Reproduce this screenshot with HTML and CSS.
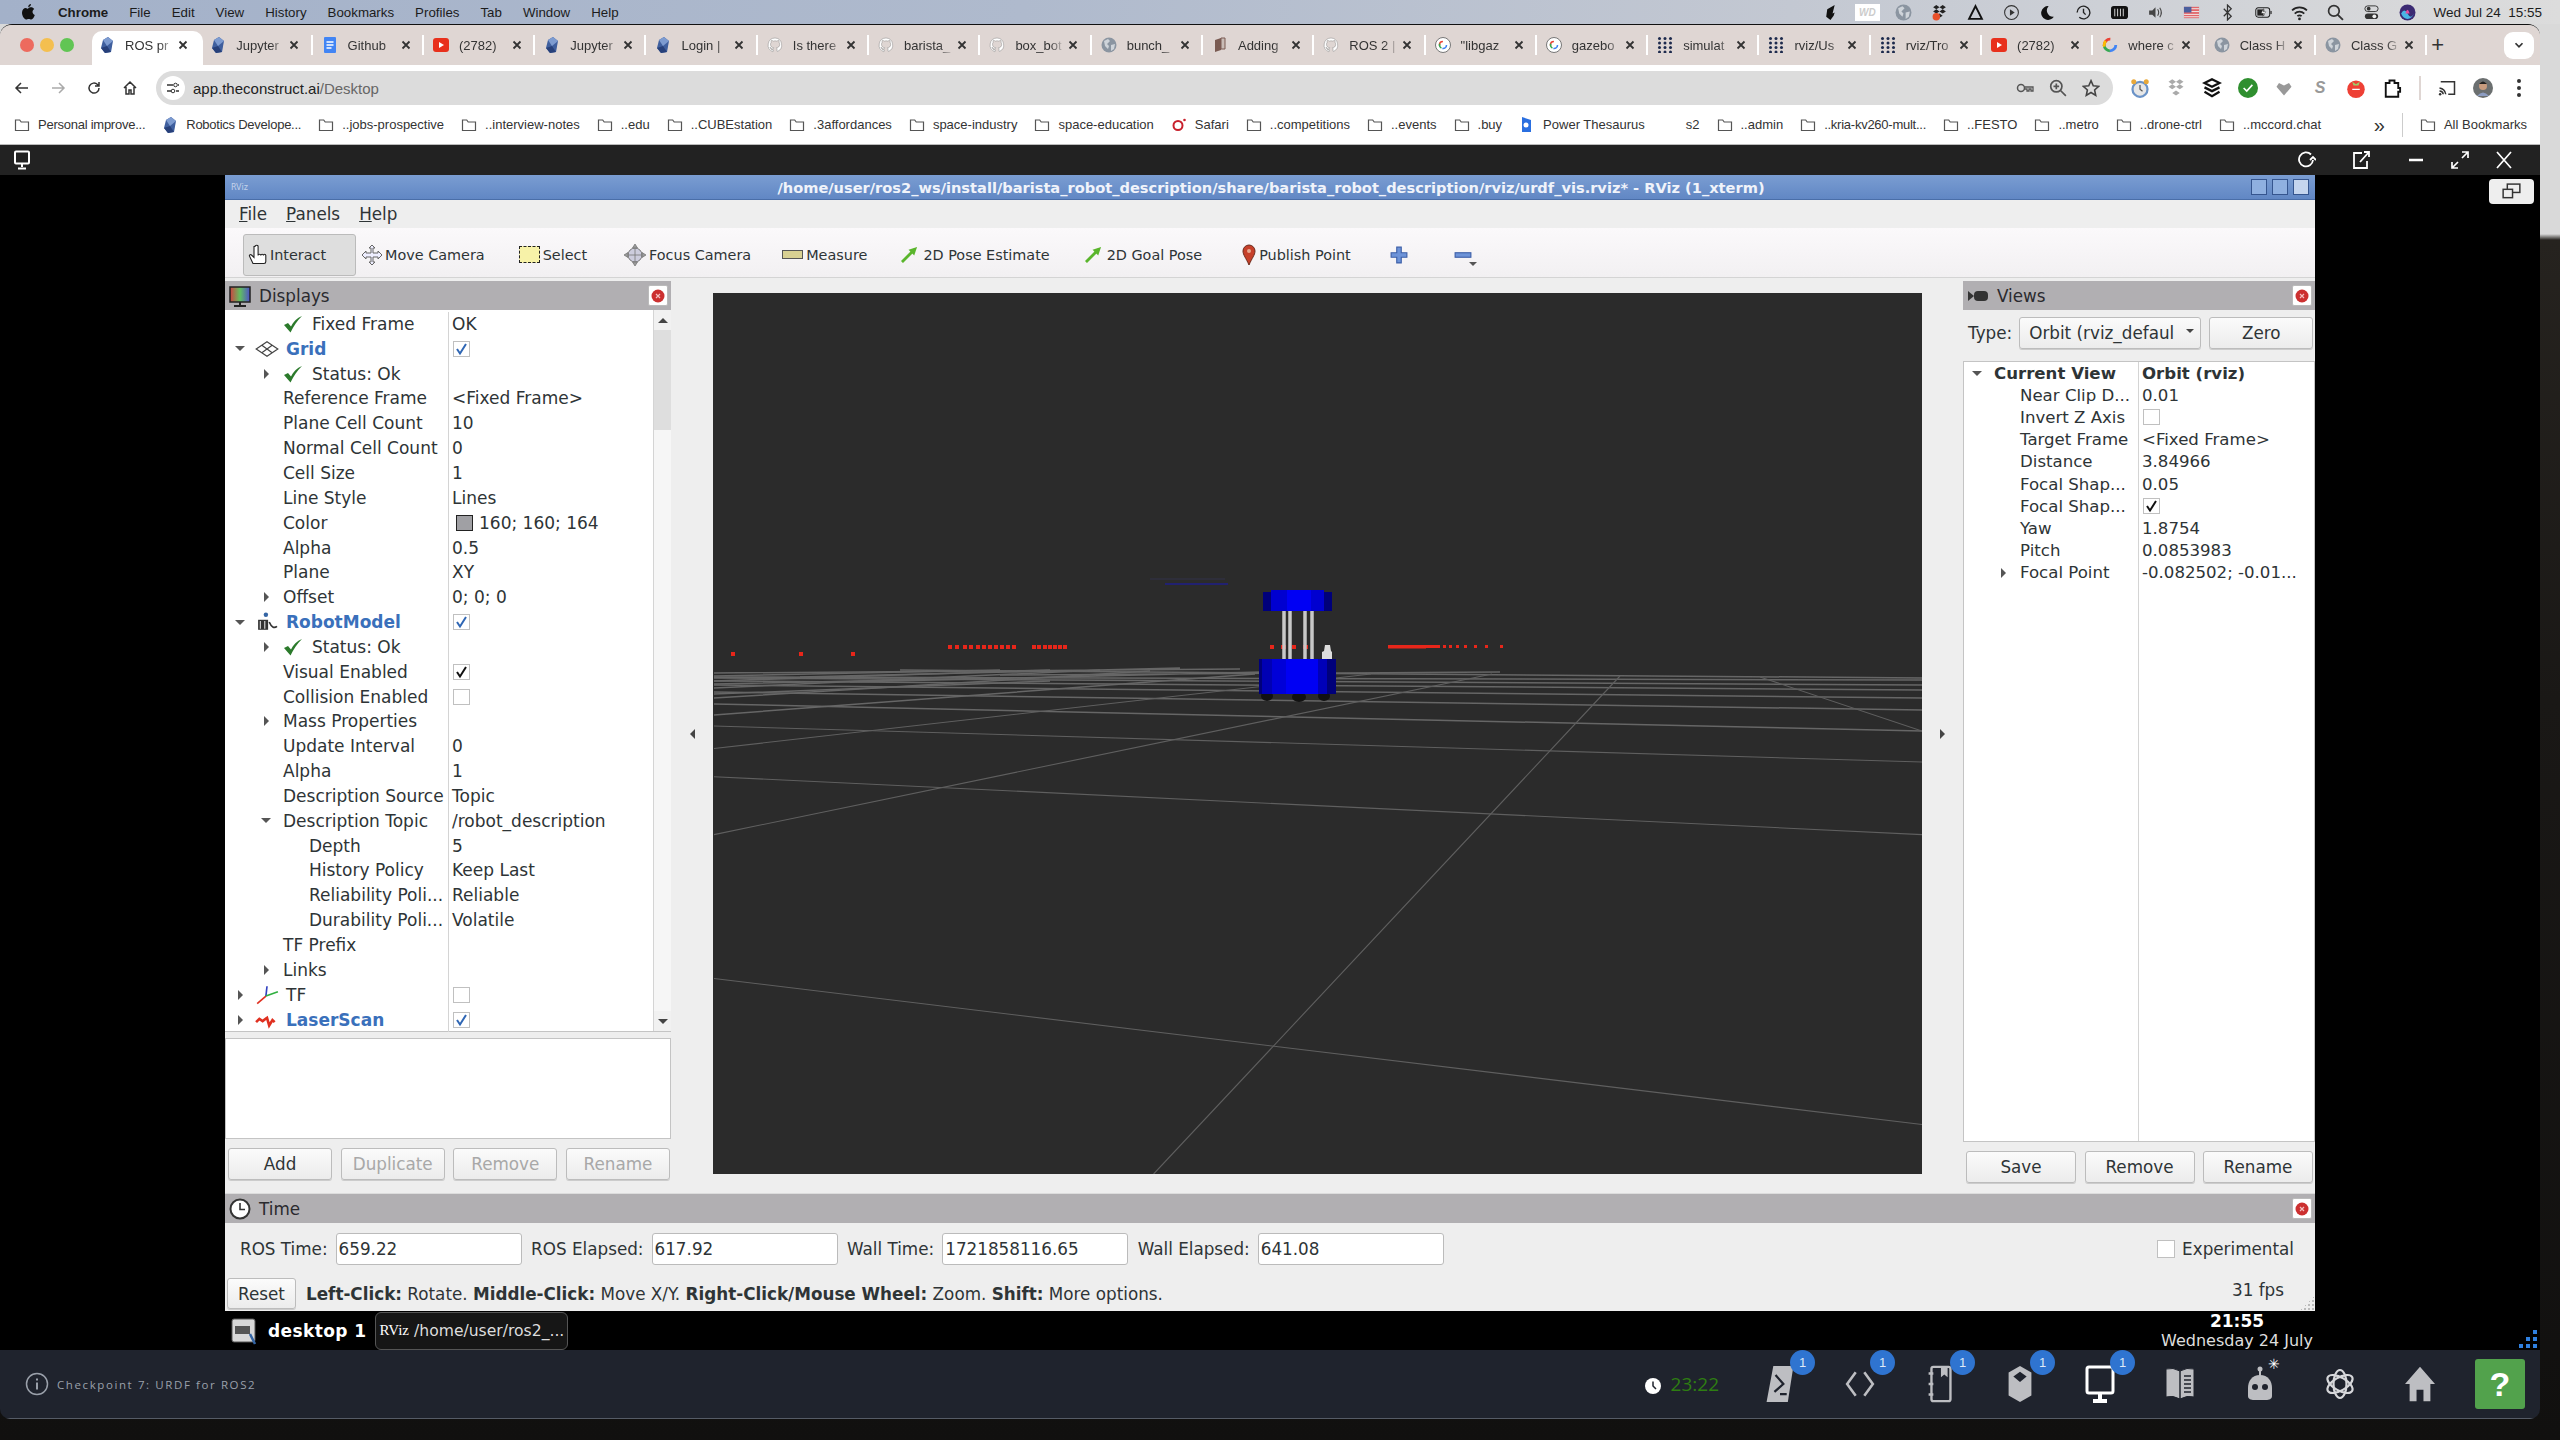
FILE: index.html
```html
<!DOCTYPE html>
<html lang="en">
<head>
    <meta charset="UTF-8">
    <title>RViz - app.theconstruct.ai</title>
    <link rel="stylesheet" href="styles.css">
</head>
<body>

<svg class="defs" width="0" height="0">
    <symbol id="i-folder" viewBox="0 0 16 16"><path d="M1.500 3h4.200l1.500 2h7.300v8.500h-13z" fill="none" stroke="#555" stroke-width="1.200"/></symbol>
    <symbol id="i-cons" viewBox="0 0 16 16"><polygon points="9,0 14,4 12,15 6,16 2,11 4,3" fill="#3f5f9e"/><polygon points="9,0 14,4 8,9 4,3" fill="#7d9bd0"/><polygon points="8,9 12,15 6,16 2,11" fill="#27407a"/></symbol>
    <symbol id="i-github" viewBox="0 0 16 16"><path d="M8 1a7 7 0 0 0-2.200 13.600c.3 0 .5-.2.5-.4v-1.400c-2 .4-2.400-.9-2.400-.9-.3-.8-.8-1-.8-1-.6-.5 0-.5 0-.5.7 0 1.100.7 1.100.7.6 1.100 1.700.8 2.100.6 0-.5.2-.8.4-1-1.600-.2-3.200-.8-3.200-3.500 0-.8.3-1.400.7-1.900 0-.2-.3-.9.1-1.900 0 0 .6-.2 2 .7a7 7 0 0 1 3.600 0c1.400-.9 2-.7 2-.7.4 1 .1 1.700.1 1.900.5.5.7 1.100.7 1.900 0 2.700-1.600 3.300-3.200 3.500.3.2.5.7.5 1.300v2c0 .2.1.4.5.4A7 7 0 0 0 8 1z" fill="#fff" stroke="#8a8a8a" stroke-width=".5"/></symbol>
    <symbol id="i-docs" viewBox="0 0 16 16"><rect x="2" y="0" width="12" height="16" rx="1" fill="#4285f4"/><path d="M4.500 5h7M4.500 8h7M4.500 11h5" stroke="#fff" stroke-width="1.300"/></symbol>
    <symbol id="i-yt" viewBox="0 0 16 16"><rect x="0" y="1" width="16" height="14" rx="3" fill="#e8301c"/><polygon points="6,5 11,8 6,11" fill="#fff"/></symbol>
    <symbol id="i-globe" viewBox="0 0 16 16"><circle cx="8" cy="8" r="7.500" fill="#8b95a1"/><path d="M3 4l4-2 2 2-3 3 2 2-1 3-3-3zM10 8l4-1-1 5-3 2z" fill="#cfd4da"/></symbol>
    <symbol id="i-g" viewBox="0 0 16 16"><circle cx="8" cy="8" r="7.500" fill="#fff" stroke="#777"/><circle cx="8" cy="8" r="3.500" fill="none" stroke="#4285f4" stroke-width="1.600" stroke-dasharray="6 16"/><circle cx="8" cy="8" r="3.500" fill="none" stroke="#ea4335" stroke-width="1.600" stroke-dasharray="6 16" stroke-dashoffset="12"/><circle cx="8" cy="8" r="3.500" fill="none" stroke="#34a853" stroke-width="1.600" stroke-dasharray="5 17" stroke-dashoffset="-7"/></symbol>
    <symbol id="i-gcolor" viewBox="0 0 16 16"><circle cx="8" cy="8" r="5.800" fill="none" stroke="#4285f4" stroke-width="2.800" stroke-dasharray="9 28"/><circle cx="8" cy="8" r="5.800" fill="none" stroke="#ea4335" stroke-width="2.800" stroke-dasharray="10 27" stroke-dashoffset="20"/><circle cx="8" cy="8" r="5.800" fill="none" stroke="#34a853" stroke-width="2.800" stroke-dasharray="9 28" stroke-dashoffset="-9"/><circle cx="8" cy="8" r="5.800" fill="none" stroke="#fbbc05" stroke-width="2.800" stroke-dasharray="6 31" stroke-dashoffset="-16"/></symbol>
    <symbol id="i-dots" viewBox="0 0 16 16"><g fill="#1d2a4d"><circle cx="2.500" cy="1.500" r="1.500"/><circle cx="8" cy="1.500" r="1.500"/><circle cx="13.500" cy="1.500" r="1.500"/><circle cx="2.500" cy="6" r="1.500"/><circle cx="8" cy="6" r="1.500"/><circle cx="13.500" cy="6" r="1.500"/><circle cx="2.500" cy="10.500" r="1.500"/><circle cx="8" cy="10.500" r="1.500"/><circle cx="13.500" cy="10.500" r="1.500"/><circle cx="2.500" cy="15" r="1.500"/><circle cx="8" cy="15" r="1.500"/><circle cx="13.500" cy="15" r="1.500"/></g></symbol>
    <symbol id="i-book" viewBox="0 0 16 16"><path d="M3 3l6-2v12l-6 2z" fill="#7a5b52"/><path d="M9 1h4v11H9z" fill="#c9bcb6" stroke="#7a5b52"/></symbol>
    <symbol id="i-x" viewBox="0 0 12 12"><path d="M2.500 2.500l7 7M9.500 2.500l-7 7" stroke="#333" stroke-width="1.800"/></symbol>
    <symbol id="i-check" viewBox="0 0 20 18"><path d="M1 10l4-2 3 3.500C10 7 14 3 19 1 14 6 10.500 11 7.500 17.500z" fill="#2b7a2b"/></symbol>
    <symbol id="i-tick" viewBox="0 0 14 14"><path d="M2.500 7l3 4.500L11.500 2" fill="none" stroke="currentColor" stroke-width="2"/></symbol>
    <symbol id="i-close" viewBox="0 0 16 16"><circle cx="8" cy="8" r="6.500" fill="#cc3030"/><path d="M6 6l4 4M10 6l-4 4" stroke="#f3c0c0" stroke-width="1.200"/></symbol>
</svg>

<div class="mac-menu">
    <svg class="apple" viewBox="0 0 16 18"><path d="M11 1c.1 1.300-1 3-2.800 3C8 2.600 9.500 1.200 11 1zM8.200 5c.8 0 1.700-.7 3-.7 1 0 2.200.5 3 1.700-2.500 1.500-2 5 .6 6-.6 1.700-2 4.500-3.500 4.500-1 0-1.400-.6-2.600-.6s-1.600.6-2.600.6C4.200 16.500 2 12.800 2 9.800c0-3 1.900-4.700 3.700-4.700 1 0 1.900.9 2.500.9z" fill="#111"/></svg>
    <span class="mac-app">Chrome</span>
    <span>File</span><span>Edit</span><span>View</span><span>History</span><span>Bookmarks</span><span>Profiles</span><span>Tab</span><span>Window</span><span>Help</span>
    <div class="mac-status">
        <span class="ms"><svg viewBox="0 0 16 16"><path d="M11 1L4 5 3 12l4 3 3-4 1-3-2 1z" fill="#111"/></svg></span>
        <span class="ms"><span class="wd">WD</span></span>
        <span class="ms"><svg><use href="#i-globe"/></svg></span>
        <span class="ms"><svg viewBox="0 0 16 16"><path d="M2 3l3-2 3 2-3 2zM8 3l3-2 3 2-3 2zM2 7l3-2 3 2-3 2zM8 7l3-2 3 2-3 2zM5 11l3-2 3 2-3 2z" fill="#222"/><circle cx="5" cy="12" r="3.500" fill="#e8502a"/></svg></span>
        <span class="ms"><svg viewBox="0 0 16 16"><path d="M8 2l6 12H2z" fill="none" stroke="#111" stroke-width="1.800"/></svg></span>
        <span class="ms"><svg viewBox="0 0 16 16"><circle cx="8" cy="8" r="6.500" fill="none" stroke="#333"/><polygon points="6.500,5 11,8 6.500,11" fill="#333"/></svg></span>
        <span class="ms"><svg viewBox="0 0 16 16"><path d="M9 2a6.500 6.500 0 1 0 5 10A6 6 0 0 1 9 2z" fill="#111"/></svg></span>
        <span class="ms"><svg viewBox="0 0 16 16"><path d="M2 8a6 6 0 1 1 2 4.500M8 4.500V8l2 2" fill="none" stroke="#222" stroke-width="1.300"/></svg></span>
        <span class="ms"><svg viewBox="0 0 18 16"><rect x="0" y="1" width="18" height="14" rx="3" fill="#111"/><path d="M4 4v8M7 4v8M10 4v8M13 4v8" stroke="#ddd"/></svg></span>
        <span class="ms"><svg viewBox="0 0 16 16"><path d="M2 6h3l3-3v10l-3-3H2z" fill="#444"/><path d="M10 5q2 3 0 6M12 3.500q3 4.500 0 9" fill="none" stroke="#444"/></svg></span>
        <span class="ms"><svg viewBox="0 0 18 16"><rect x="1" y="2" width="16" height="12" fill="#e2666a"/><rect x="1" y="2" width="8" height="6" fill="#4b5f9e"/><path d="M9 4h8M9 7h8M1 10h16M1 12.500h16" stroke="#eee"/></svg></span>
        <span class="ms"><svg viewBox="0 0 16 16"><path d="M4.500 4.500l7 7L8 15V1l3.500 3.500-7 7" fill="none" stroke="#333" stroke-width="1.200"/></svg></span>
        <span class="ms"><svg viewBox="0 0 22 14"><rect x="1" y="1" width="18" height="12" rx="3" fill="none" stroke="#222" stroke-width="1.300"/><rect x="3" y="3" width="9" height="8" fill="#222"/><path d="M11 2l-3 6h3l-1 4 4-6h-3z" fill="#fff" stroke="#222" stroke-width=".5"/><rect x="20" y="5" width="1.500" height="4" fill="#222"/></svg></span>
        <span class="ms"><svg viewBox="0 0 16 16"><path d="M1 6a10 10 0 0 1 14 0M3.500 9a6.500 6.500 0 0 1 9 0M6 11.500a3 3 0 0 1 4 0" fill="none" stroke="#222" stroke-width="1.600"/><circle cx="8" cy="14" r="1.300" fill="#222"/></svg></span>
        <span class="ms"><svg viewBox="0 0 16 16"><circle cx="6.500" cy="6.500" r="5" fill="none" stroke="#333" stroke-width="1.600"/><path d="M10 10l5 5" stroke="#333" stroke-width="1.800"/></svg></span>
        <span class="ms"><svg viewBox="0 0 16 18"><rect x="1" y="2" width="14" height="6" rx="3" fill="none" stroke="#333"/><rect x="1" y="10" width="14" height="6" rx="3" fill="#333"/><circle cx="5" cy="5" r="2" fill="#333"/><circle cx="11" cy="13" r="2" fill="#eee"/></svg></span>
        <span class="ms"><svg viewBox="0 0 16 16"><circle cx="8" cy="8" r="7.500" fill="#3b2a73"/><path d="M2 9q3-6 6 0t6 0q-2 5-6 5t-6-5z" fill="#49b6e6"/><path d="M6 9q2-7 4 0z" fill="#e74fa0"/></svg></span>
        <span class="mac-clock">Wed Jul 24&nbsp; 15:55</span>
    </div>
</div>

<div class="browser">
    <div class="tabstrip">
        <div class="lights"><i class="red"></i><i class="amber"></i><i class="green"></i></div>
        <div class="tab active"><svg class="fav"><use href="#i-cons"/></svg><span class="tab-title">ROS pr</span><svg class="tab-x"><use href="#i-x"/></svg></div>
        <div class="tab"><svg class="fav"><use href="#i-cons"/></svg><span class="tab-title">Jupyter</span><svg class="tab-x"><use href="#i-x"/></svg></div>
        <div class="tab"><svg class="fav"><use href="#i-docs"/></svg><span class="tab-title">Github</span><svg class="tab-x"><use href="#i-x"/></svg></div>
        <div class="tab"><svg class="fav"><use href="#i-yt"/></svg><span class="tab-title">(2782)</span><svg class="tab-x"><use href="#i-x"/></svg></div>
        <div class="tab"><svg class="fav"><use href="#i-cons"/></svg><span class="tab-title">Jupyter</span><svg class="tab-x"><use href="#i-x"/></svg></div>
        <div class="tab"><svg class="fav"><use href="#i-cons"/></svg><span class="tab-title">Login |</span><svg class="tab-x"><use href="#i-x"/></svg></div>
        <div class="tab"><svg class="fav"><use href="#i-github"/></svg><span class="tab-title">Is there</span><svg class="tab-x"><use href="#i-x"/></svg></div>
        <div class="tab"><svg class="fav"><use href="#i-github"/></svg><span class="tab-title">barista_</span><svg class="tab-x"><use href="#i-x"/></svg></div>
        <div class="tab"><svg class="fav"><use href="#i-github"/></svg><span class="tab-title">box_bot</span><svg class="tab-x"><use href="#i-x"/></svg></div>
        <div class="tab"><svg class="fav"><use href="#i-globe"/></svg><span class="tab-title">bunch_</span><svg class="tab-x"><use href="#i-x"/></svg></div>
        <div class="tab"><svg class="fav"><use href="#i-book"/></svg><span class="tab-title">Adding</span><svg class="tab-x"><use href="#i-x"/></svg></div>
        <div class="tab"><svg class="fav"><use href="#i-github"/></svg><span class="tab-title">ROS 2 |</span><svg class="tab-x"><use href="#i-x"/></svg></div>
        <div class="tab"><svg class="fav"><use href="#i-g"/></svg><span class="tab-title">"libgaz</span><svg class="tab-x"><use href="#i-x"/></svg></div>
        <div class="tab"><svg class="fav"><use href="#i-g"/></svg><span class="tab-title">gazebo</span><svg class="tab-x"><use href="#i-x"/></svg></div>
        <div class="tab"><svg class="fav"><use href="#i-dots"/></svg><span class="tab-title">simulat</span><svg class="tab-x"><use href="#i-x"/></svg></div>
        <div class="tab"><svg class="fav"><use href="#i-dots"/></svg><span class="tab-title">rviz/Us</span><svg class="tab-x"><use href="#i-x"/></svg></div>
        <div class="tab"><svg class="fav"><use href="#i-dots"/></svg><span class="tab-title">rviz/Tro</span><svg class="tab-x"><use href="#i-x"/></svg></div>
        <div class="tab"><svg class="fav"><use href="#i-yt"/></svg><span class="tab-title">(2782)</span><svg class="tab-x"><use href="#i-x"/></svg></div>
        <div class="tab"><svg class="fav"><use href="#i-gcolor"/></svg><span class="tab-title">where c</span><svg class="tab-x"><use href="#i-x"/></svg></div>
        <div class="tab"><svg class="fav"><use href="#i-globe"/></svg><span class="tab-title">Class H</span><svg class="tab-x"><use href="#i-x"/></svg></div>
        <div class="tab"><svg class="fav"><use href="#i-globe"/></svg><span class="tab-title">Class G</span><svg class="tab-x"><use href="#i-x"/></svg></div>
        <span class="new-tab">+</span>
        <span class="tab-menu"><svg viewBox="0 0 12 12"><path d="M3 4.500l3 3 3-3" fill="none" stroke="#333" stroke-width="1.500"/></svg></span>
    </div>

    <div class="omnirow">
        <span class="nav"><svg viewBox="0 0 16 16"><path d="M14 8H2M7 3L2 8l5 5" fill="none" stroke="#333" stroke-width="1.500"/></svg></span>
        <span class="nav"><svg viewBox="0 0 16 16"><path d="M2 8h12M9 3l5 5-5 5" fill="none" stroke="#aaa" stroke-width="1.500"/></svg></span>
        <span class="nav"><svg viewBox="0 0 16 16"><path d="M13 8a5 5 0 1 1-1.500-3.500L13 6M13 2v4H9" fill="none" stroke="#333" stroke-width="1.500"/></svg></span>
        <span class="nav"><svg viewBox="0 0 16 16"><path d="M2 8l6-6 6 6M4 7v7h3v-4h2v4h3V7" fill="none" stroke="#333" stroke-width="1.500"/></svg></span>
        <div class="omnibox">
            <span class="site-btn"><svg viewBox="0 0 16 16"><path d="M2 5h6M11 11h3M2 11h4M13 5h1" stroke="#333" stroke-width="1.300"/><circle cx="10.500" cy="5" r="1.800" fill="none" stroke="#333"/><circle cx="8" cy="11" r="1.800" fill="none" stroke="#333"/></svg></span>
            <span class="url">app.theconstruct.ai<span class="url-path">/Desktop</span></span>
            <div class="omni-right">
                <span class="oi"><svg viewBox="0 0 18 14"><circle cx="5" cy="7" r="3.500" fill="none" stroke="#555" stroke-width="1.500"/><path d="M8.500 6H17v4h-2V8h-2v2h-2V8H8.500" fill="none" stroke="#555" stroke-width="1.300"/></svg></span>
                <span class="oi"><svg viewBox="0 0 16 16"><circle cx="6.500" cy="6.500" r="5" fill="none" stroke="#555" stroke-width="1.500"/><path d="M10 10l5 5M6.500 4v5M4 6.500h5" stroke="#555" stroke-width="1.500"/></svg></span>
                <span class="oi"><svg viewBox="0 0 16 16"><path d="M8 1.500l2 4.500 4.800.5-3.600 3.200 1 4.800L8 12l-4.200 2.500 1-4.800L1.200 6.500 6 6z" fill="none" stroke="#444" stroke-width="1.400"/></svg></span>
            </div>
        </div>
        <span class="ext"><svg viewBox="0 0 16 16"><circle cx="8" cy="9" r="6" fill="#e7e7e7" stroke="#6b93c7" stroke-width="1.800"/><path d="M8 5.500V9l2 1.500" fill="none" stroke="#555"/><circle cx="3" cy="3" r="2" fill="#e8a83a"/><circle cx="13" cy="3" r="2" fill="#e8a83a"/></svg></span>
        <span class="ext"><svg viewBox="0 0 16 16"><path d="M2 3l3-2 3 2-3 2zM8 3l3-2 3 2-3 2zM2 7l3-2 3 2-3 2zM8 7l3-2 3 2-3 2zM5 12l3-2 3 2-3 2z" fill="#aaa"/></svg></span>
        <span class="ext"><svg viewBox="0 0 16 16"><path d="M8 1l6 3-6 3-6-3zM2 7.500l6 3 6-3M2 11l6 3.500 6-3.500" fill="none" stroke="#111" stroke-width="1.800"/></svg></span>
        <span class="ext"><svg viewBox="0 0 16 16"><circle cx="8" cy="8" r="8" fill="#2f8f2f"/><path d="M4.500 8l2.500 2.500 4.500-5" fill="none" stroke="#fff" stroke-width="1.300"/></svg></span>
        <span class="ext"><svg viewBox="0 0 16 16"><path d="M8 14L2 7l2-3 4 2 4-2 2 3z" fill="#999"/></svg></span>
        <span class="ext ext-s">S</span>
        <span class="ext"><svg viewBox="0 0 16 16"><circle cx="8" cy="9" r="7" fill="#ee4035"/><path d="M5 3l3 2 3-2-1 3H6z" fill="#9ad06a"/><path d="M5 9h6" stroke="#fff"/></svg></span>
        <span class="ext"><svg viewBox="0 0 16 16"><path d="M3 4h3V2h4v2h3v4h1.500v3H13v4H3z" fill="none" stroke="#111" stroke-width="1.500"/></svg></span>
        <span class="omni-sep"></span>
        <span class="ext"><svg viewBox="0 0 16 16"><path d="M3 3h11v10h-5M2 8a6 6 0 0 1 5 5M2 10.500a3 3 0 0 1 3 2.500" fill="none" stroke="#333" stroke-width="1.200"/><circle cx="2.500" cy="13" r="1" fill="#333"/></svg></span>
        <span class="ext"><svg viewBox="0 0 20 20"><circle cx="10" cy="10" r="10" fill="#6b6f70"/><circle cx="10" cy="8" r="4" fill="#c79b7e"/><path d="M4 18q6-7 12 0z" fill="#8d9dc2"/><path d="M6 6q4-5 8 0z" fill="#222"/></svg></span>
        <span class="ext kebab"><i></i><i></i><i></i></span>
    </div>

    <div class="bookmarks">
        <span class="bm tight"><svg><use href="#i-folder"/></svg>Personal improve...</span>
        <span class="bm tight"><svg><use href="#i-cons"/></svg>Robotics Develope...</span>
        <span class="bm"><svg><use href="#i-folder"/></svg>..jobs-prospective</span>
        <span class="bm"><svg><use href="#i-folder"/></svg>..interview-notes</span>
        <span class="bm"><svg><use href="#i-folder"/></svg>..edu</span>
        <span class="bm"><svg><use href="#i-folder"/></svg>..CUBEstation</span>
        <span class="bm"><svg><use href="#i-folder"/></svg>.3affordances</span>
        <span class="bm"><svg><use href="#i-folder"/></svg>space-industry</span>
        <span class="bm"><svg><use href="#i-folder"/></svg>space-education</span>
        <span class="bm"><svg viewBox="0 0 16 16"><circle cx="7" cy="8.500" r="4.500" fill="none" stroke="#c8202c" stroke-width="2"/><circle cx="13.500" cy="3" r="1.300" fill="#c8202c"/></svg>Safari</span>
        <span class="bm"><svg><use href="#i-folder"/></svg>..competitions</span>
        <span class="bm"><svg><use href="#i-folder"/></svg>..events</span>
        <span class="bm"><svg><use href="#i-folder"/></svg>.buy</span>
        <span class="bm"><svg viewBox="0 0 16 16"><path d="M3 0l9 3v12H3z" fill="#2a6fe0"/><circle cx="7" cy="8" r="2.500" fill="#fff"/></svg>Power Thesaurus</span>
        <span class="bm"><svg></svg>s2</span>
        <span class="bm"><svg><use href="#i-folder"/></svg>..admin</span>
        <span class="bm tight"><svg><use href="#i-folder"/></svg>..kria-kv260-mult...</span>
        <span class="bm"><svg><use href="#i-folder"/></svg>..FESTO</span>
        <span class="bm"><svg><use href="#i-folder"/></svg>..metro</span>
        <span class="bm"><svg><use href="#i-folder"/></svg>..drone-ctrl</span>
        <span class="bm"><svg><use href="#i-folder"/></svg>..mccord.chat</span>
        <span class="bm-more">»</span>
        <span class="bm-sep"></span>
        <span class="bm"><svg><use href="#i-folder"/></svg>All Bookmarks</span>
    </div>

    <div class="remote-bar">
        <svg class="rb-icon" viewBox="0 0 20 20"><rect x="3" y="1.500" width="14" height="12" rx="1" fill="none" stroke="#fff" stroke-width="2"/><path d="M10 14v3M6 18.500h8" stroke="#fff" stroke-width="2"/></svg>
        <div class="rb-group wide">
            <svg class="rb-icon" viewBox="0 0 20 20"><path d="M15 4.500A7 7 0 1 0 17 10M14 10l3-3 3 3" fill="none" stroke="#fff" stroke-width="1.800"/></svg>
            <svg class="rb-icon" viewBox="0 0 20 20"><path d="M16 11v7H3V3h8M9 12l9-10M13 2h5v5" fill="none" stroke="#fff" stroke-width="1.800"/></svg>
        </div>
        <div class="rb-group">
            <svg class="rb-icon" viewBox="0 0 20 20"><path d="M3 10h14" stroke="#fff" stroke-width="2.500"/></svg>
            <svg class="rb-icon" viewBox="0 0 20 20"><path d="M2 18l6-6M2 12v6h6M18 2l-6 6M12 2h6v6" fill="none" stroke="#fff" stroke-width="1.700"/></svg>
            <svg class="rb-icon" viewBox="0 0 20 20"><path d="M3 2l14 16M17 2L3 18" stroke="#fff" stroke-width="1.700"/></svg>
        </div>
    </div>

    <div class="desktop">
        <span class="float-btn"><svg viewBox="0 0 22 18"><rect x="7" y="2" width="12" height="8" fill="none" stroke="#333" stroke-width="1.400"/><rect x="3" y="7" width="9" height="8" fill="#eee" stroke="#333" stroke-width="1.400"/></svg></span>

        <div class="rviz">
            <div class="titlebar">
                <span class="title-logo">RViz</span>
                <span class="title-text">/home/user/ros2_ws/install/barista_robot_description/share/barista_robot_description/rviz/urdf_vis.rviz* - RViz (1_xterm)</span>
                <span class="win-btns"><i></i><i></i><i class="win-close"></i></span>
            </div>
            <div class="menubar"><span><u>F</u>ile</span><span><u>P</u>anels</span><span><u>H</u>elp</span></div>

            <div class="toolbar">
                <span class="grip"></span>
                <span class="tool pressed"><svg viewBox="0 0 22 22"><path d="M7 2.500v11l-2.500-2.500c-1.200-1-2.800.3-1.800 1.500l3.300 7h11c1.200 0 1.800-1 1.800-2v-6c0-1.600-2.300-1.600-2.300 0 0-1.600-2.700-1.600-2.700 0 0-1.600-2.700-1.600-2.700 0V2.500c0-1.700-3.100-1.700-3.100 0z" fill="#fff" stroke="#222" stroke-width="1.100"/></svg>Interact</span>
                <span class="tool move-cam"><svg viewBox="0 0 22 22"><path d="M11 1l3 3h-2v5h5V7l4 4-4 4v-2h-5v5h2l-3 3-3-3h2v-5H5v2l-4-4 4-4v2h5V4H8z" fill="#eef" stroke="#666" stroke-width="1"/></svg>Move Camera</span>
                <span class="tool select"><span class="sel-box"></span>Select</span>
                <span class="tool focus"><svg viewBox="0 0 22 22"><circle cx="11" cy="11" r="7" fill="#ccd" stroke="#777"/><path d="M11 0l2.500 4h-5zM11 22l2.500-4h-5zM0 11l4-2.500v5zM22 11l-4-2.500v5zM11 4v14M4 11h14" fill="#999" stroke="#777" stroke-width=".8"/></svg>Focus Camera</span>
                <span class="tool measure"><span class="ruler"></span>Measure</span>
                <span class="tool pose"><svg viewBox="0 0 18 18"><path d="M1 17L14 4" stroke="#5ab52c" stroke-width="3"/><polygon points="17,1 8,4 14,10" fill="#5ab52c"/></svg>2D Pose Estimate</span>
                <span class="tool goal"><svg viewBox="0 0 18 18"><path d="M1 17L14 4" stroke="#5ab52c" stroke-width="3"/><polygon points="17,1 8,4 14,10" fill="#5ab52c"/></svg>2D Goal Pose</span>
                <span class="tool pin"><svg viewBox="0 0 14 22"><path d="M7 21C4 14 1 11 1 7a6 6 0 0 1 12 0c0 4-3 7-6 14z" fill="#c6402a" stroke="#6b2a1c"/><circle cx="7" cy="7" r="2" fill="#e8a890"/></svg>Publish Point</span>
                <span class="tool plus"><svg viewBox="0 0 16 16"><path d="M6 1h4v5h5v4h-5v5H6v-5H1V6h5z" fill="#6d93d8" stroke="#3d5fa8"/></svg></span>
                <span class="tool minus"><svg viewBox="0 0 16 16"><rect x="1" y="6" width="14" height="4" fill="#6d93d8" stroke="#3d5fa8"/></svg></span>
                <span class="more-arrow"></span>
            </div>

            <div class="main">
                <div class="dock displays">
                    <div class="dock-title">
                        <svg viewBox="0 0 22 22"><defs><linearGradient id="rainbow"><stop offset="0" stop-color="#d04040"/><stop offset=".5" stop-color="#60c060"/><stop offset="1" stop-color="#5050c8"/></linearGradient></defs><rect x="1" y="2" width="20" height="15" fill="url(#rainbow)" stroke="#222" stroke-width="1.500"/><path d="M11 17v3M5 21h12" stroke="#222" stroke-width="2"/></svg>
                        <span>Displays</span>
                        <span class="dock-close"><svg><use href="#i-close"/></svg></span>
                    </div>
                    <div class="tree">
                        <div class="tree-rows">
                            <div class="row"><div class="prop lv1"><span class="twist"></span><span class="slot"><svg><use href="#i-check"/></svg></span>Fixed Frame</div><div class="val">OK</div></div>
                            <div class="row"><div class="prop lv0"><span class="twist open"></span><span class="slot-0"><svg viewBox="0 0 20 14"><path d="M10 1l9 6-9 6-9-6zM6 4l8 6M14 4l-8 6" fill="none" stroke="#444"/></svg></span><b class="on">Grid</b></div><div class="val"><span class="check blue"><svg><use href="#i-tick"/></svg></span></div></div>
                            <div class="row"><div class="prop lv1"><span class="twist shut"></span><span class="slot"><svg><use href="#i-check"/></svg></span>Status: Ok</div><div class="val"></div></div>
                            <div class="row"><div class="prop lv1"><span class="twist"></span><span class="label">Reference Frame</span></div><div class="val">&lt;Fixed Frame&gt;</div></div>
                            <div class="row"><div class="prop lv1"><span class="twist"></span><span class="label">Plane Cell Count</span></div><div class="val">10</div></div>
                            <div class="row"><div class="prop lv1"><span class="twist"></span><span class="label">Normal Cell Count</span></div><div class="val">0</div></div>
                            <div class="row"><div class="prop lv1"><span class="twist"></span><span class="label">Cell Size</span></div><div class="val">1</div></div>
                            <div class="row"><div class="prop lv1"><span class="twist"></span><span class="label">Line Style</span></div><div class="val">Lines</div></div>
                            <div class="row"><div class="prop lv1"><span class="twist"></span><span class="label">Color</span></div><div class="val"><span class="swatch"></span>160; 160; 164</div></div>
                            <div class="row"><div class="prop lv1"><span class="twist"></span><span class="label">Alpha</span></div><div class="val">0.5</div></div>
                            <div class="row"><div class="prop lv1"><span class="twist"></span><span class="label">Plane</span></div><div class="val">XY</div></div>
                            <div class="row"><div class="prop lv1"><span class="twist shut"></span><span class="label">Offset</span></div><div class="val">0; 0; 0</div></div>
                            <div class="row"><div class="prop lv0"><span class="twist open"></span><span class="slot-0"><svg viewBox="0 0 20 18"><circle cx="9" cy="2.500" r="2" fill="#3465a4"/><rect x="2" y="7" width="9" height="9" fill="#333"/><path d="M4 8v7M8 8v7" stroke="#ddd"/><path d="M12 9q3 7 7 4" fill="none" stroke="#333" stroke-width="1.500"/></svg></span><b class="on">RobotModel</b></div><div class="val"><span class="check blue"><svg><use href="#i-tick"/></svg></span></div></div>
                            <div class="row"><div class="prop lv1"><span class="twist shut"></span><span class="slot"><svg><use href="#i-check"/></svg></span>Status: Ok</div><div class="val"></div></div>
                            <div class="row"><div class="prop lv1"><span class="twist"></span><span class="label">Visual Enabled</span></div><div class="val"><span class="check"><svg><use href="#i-tick"/></svg></span></div></div>
                            <div class="row"><div class="prop lv1"><span class="twist"></span><span class="label">Collision Enabled</span></div><div class="val"><span class="check"></span></div></div>
                            <div class="row"><div class="prop lv1"><span class="twist shut"></span><span class="label">Mass Properties</span></div><div class="val"></div></div>
                            <div class="row"><div class="prop lv1"><span class="twist"></span><span class="label">Update Interval</span></div><div class="val">0</div></div>
                            <div class="row"><div class="prop lv1"><span class="twist"></span><span class="label">Alpha</span></div><div class="val">1</div></div>
                            <div class="row"><div class="prop lv1"><span class="twist"></span><span class="label">Description Source</span></div><div class="val">Topic</div></div>
                            <div class="row"><div class="prop lv1"><span class="twist open"></span><span class="label">Description Topic</span></div><div class="val">/robot_description</div></div>
                            <div class="row"><div class="prop lv2"><span class="twist"></span>Depth</div><div class="val">5</div></div>
                            <div class="row"><div class="prop lv2"><span class="twist"></span>History Policy</div><div class="val">Keep Last</div></div>
                            <div class="row"><div class="prop lv2"><span class="twist"></span>Reliability Poli...</div><div class="val">Reliable</div></div>
                            <div class="row"><div class="prop lv2"><span class="twist"></span>Durability Poli...</div><div class="val">Volatile</div></div>
                            <div class="row"><div class="prop lv1"><span class="twist"></span><span class="label">TF Prefix</span></div><div class="val"></div></div>
                            <div class="row"><div class="prop lv1"><span class="twist shut"></span><span class="label">Links</span></div><div class="val"></div></div>
                            <div class="row"><div class="prop lv0"><span class="twist shut"></span><span class="slot-0"><svg viewBox="0 0 22 18"><path d="M10 10L2 17" stroke="#e03020" stroke-width="1.500"/><path d="M10 10l1-9" stroke="#3040c0" stroke-width="1.500"/><path d="M10 10l11-4" stroke="#30b040" stroke-width="1.500"/></svg></span><span class="tf-name">TF</span></div><div class="val"><span class="check"></span></div></div>
                            <div class="row"><div class="prop lv0"><span class="twist shut"></span><span class="slot-0"><svg viewBox="0 0 22 14"><path d="M1 9l3-3 3 2 4-3 2 7 3-5 2 2" fill="none" stroke="#e03020" stroke-width="2.400"/></svg></span><b class="on">LaserScan</b></div><div class="val"><span class="check blue"><svg><use href="#i-tick"/></svg></span></div></div>
                        </div>
                        <div class="scrollbar">
                            <span class="sb-btn"><i class="up"></i></span>
                            <span class="sb-thumb"></span>
                            <span class="sb-track"></span>
                            <span class="sb-btn"><i class="down"></i></span>
                        </div>
                    </div>
                    <div class="split-handle"></div>
                    <div class="desc"></div>
                    <div class="dock-btns"><span class="btn">Add</span><span class="btn off">Duplicate</span><span class="btn off">Remove</span><span class="btn off">Rename</span></div>
                </div>

                <div class="hide-handle"><i class="left"></i></div>

                <svg class="viewer" viewBox="713 293 1209 881">
                    <rect x="713" y="293" width="1209" height="881" fill="#2b2b2b"/>
                    <g class="grid-far">
                        <path d="M714 678L1922 685M714 677L1922 680M900 670L1922 678M714 681L1922 690M714 685L1922 698M714 692L1922 710M714 704L1922 731"/>
                        <path d="M714 676L1000 670M714 681L1050 670M714 688L1100 670M714 698L1150 671M714 715L1255 674"/>
                        <path d="M800 677L1180 668M850 682L1300 671M1000 675L1500 672M714 673L1240 669M714 684L1000 678M714 694L1050 681"/>
                    </g>
                    <g class="grid-near">
                        <path d="M714 726L1922 762M714 776.700L1922 834.600M714 978.500L1922 1124.500"/>
                        <path d="M714 748.500L1371 674M714 834.600L1492 674M1153.600 1174L1620 676M1760 677L1922 731"/>
                    </g>
                    <path d="M1165 584H1228" stroke="#1f1f88" stroke-width="1.500"/>
                    <path d="M1150 579H1225" stroke="#33334a" stroke-width="1"/>
                    <g fill="#e8261a">
                        <rect x="731" y="652" width="4" height="4"/><rect x="799" y="652" width="4" height="4"/><rect x="851" y="652" width="4" height="4"/>
                        <rect x="948" y="645" width="4" height="4"/><rect x="955" y="645" width="4" height="4"/><rect x="963" y="645" width="4" height="4"/><rect x="969" y="645" width="4" height="4"/><rect x="976" y="645" width="4" height="4"/><rect x="982" y="645" width="4" height="4"/><rect x="988" y="645" width="4" height="4"/><rect x="994" y="645" width="4" height="4"/><rect x="1000" y="645" width="4" height="4"/><rect x="1006" y="645" width="4" height="4"/><rect x="1012" y="645" width="4" height="4"/>
                        <rect x="1032" y="645" width="4" height="4"/><rect x="1037" y="645" width="4" height="4"/><rect x="1043" y="645" width="4" height="4"/><rect x="1048" y="645" width="4" height="4"/><rect x="1053" y="645" width="4" height="4"/><rect x="1058" y="645" width="4" height="4"/><rect x="1063" y="645" width="4" height="4"/>
                        <rect x="1270" y="645" width="4" height="4"/><rect x="1281" y="645" width="5" height="4"/><rect x="1292" y="645" width="4" height="4"/><rect x="1303" y="645" width="5" height="4"/>
                        <rect x="1388" y="645" width="38" height="3.500"/><rect x="1426" y="645" width="14" height="3"/><rect x="1443" y="645" width="3" height="3"/><rect x="1449" y="645" width="3" height="3"/><rect x="1456" y="645" width="3" height="3"/><rect x="1464" y="645" width="3" height="3"/><rect x="1474" y="645" width="3" height="3"/><rect x="1485" y="645" width="3" height="3"/><rect x="1500" y="645" width="3" height="3"/>
                    </g>
                    <g fill="#111">
                        <ellipse cx="1267" cy="696" rx="6" ry="5"/><ellipse cx="1299" cy="697" rx="7" ry="5"/><ellipse cx="1324" cy="696" rx="6" ry="5"/>
                    </g>
                    <path d="M1284 611v49M1290 611v49M1305 611v49M1312 611v49" stroke="#c8c8c8" stroke-width="3.500"/>
                    <path d="M1322 660v-8l2-1 1-6h5l1 6 1 1v8z" fill="#ddd"/>
                    <rect x="1259" y="659" width="77" height="35" fill="#00007a"/>
                    <rect x="1262" y="659" width="10" height="35" fill="#0000b4"/>
                    <rect x="1272" y="659" width="14" height="35" fill="#0000d8"/>
                    <rect x="1286" y="659" width="32" height="35" fill="#0000f4"/>
                    <rect x="1318" y="659" width="9" height="35" fill="#0000b8"/>
                    <rect x="1263" y="592" width="69" height="19" fill="#00007a"/>
                    <rect x="1271" y="590" width="53" height="21" fill="#0000d0"/>
                    <rect x="1287" y="590" width="24" height="21" fill="#0000f4"/>
                </svg>

                <div class="hide-handle right-side"><i class="right"></i></div>

                <div class="dock views">
                    <div class="dock-title">
                        <svg viewBox="0 0 22 14"><path d="M1 2l6 5-6 5z" fill="#333"/><rect x="7" y="2" width="14" height="10" rx="4" fill="#333"/></svg>
                        <span>Views</span>
                        <span class="dock-close"><svg><use href="#i-close"/></svg></span>
                    </div>
                    <div class="view-type">
                        <span>Type:</span>
                        <span class="btn combo">Orbit (rviz_defaul<i class="down"></i></span>
                        <span class="btn zero">Zero</span>
                    </div>
                    <div class="view-tree">
                        <div class="vrow strong"><div class="vprop vp-top"><span class="twist open"></span>Current View</div><div class="vval">Orbit (rviz)</div></div>
                        <div class="vrow"><div class="vprop">Near Clip D...</div><div class="vval">0.01</div></div>
                        <div class="vrow"><div class="vprop">Invert Z Axis</div><div class="vval"><span class="check"></span></div></div>
                        <div class="vrow"><div class="vprop">Target Frame</div><div class="vval">&lt;Fixed Frame&gt;</div></div>
                        <div class="vrow"><div class="vprop">Distance</div><div class="vval">3.84966</div></div>
                        <div class="vrow"><div class="vprop">Focal Shap...</div><div class="vval">0.05</div></div>
                        <div class="vrow"><div class="vprop">Focal Shap...</div><div class="vval"><span class="check"><svg><use href="#i-tick"/></svg></span></div></div>
                        <div class="vrow"><div class="vprop">Yaw</div><div class="vval">1.8754</div></div>
                        <div class="vrow"><div class="vprop">Pitch</div><div class="vval">0.0853983</div></div>
                        <div class="vrow"><div class="vprop vp-sub"><span class="twist shut"></span>Focal Point</div><div class="vval">-0.082502; -0.01...</div></div>
                        <div class="vrow vfill"><div class="vprop"></div><div class="vval"></div></div>
                    </div>
                    <div class="dock-btns view-btns"><span class="btn">Save</span><span class="btn">Remove</span><span class="btn">Rename</span></div>
                </div>
            </div>

            <div class="time-panel">
                <div class="dock-title">
                    <svg viewBox="0 0 22 22"><circle cx="11" cy="11" r="9.500" fill="#fff" stroke="#333" stroke-width="2"/><path d="M11 5v6.500h5" fill="none" stroke="#333" stroke-width="1.600"/></svg>
                    <span>Time</span>
                    <span class="dock-close"><svg><use href="#i-close"/></svg></span>
                </div>
                <div class="time-row">
                    <span>ROS Time:</span><span class="field">659.22</span>
                    <span>ROS Elapsed:</span><span class="field">617.92</span>
                    <span>Wall Time:</span><span class="field">1721858116.65</span>
                    <span>Wall Elapsed:</span><span class="field">641.08</span>
                    <span class="exp"><span class="check"></span>Experimental</span>
                </div>
                <div class="hint-row">
                    <span class="btn reset">Reset</span>
                    <span class="hint"><b>Left-Click:</b> Rotate. <b>Middle-Click:</b> Move X/Y. <b>Right-Click/Mouse Wheel:</b> Zoom. <b>Shift:</b> More options.</span>
                    <span class="fps">31 fps</span>
                </div>
                <span class="size-grip"></span>
            </div>
        </div>

        <div class="taskbar">
            <svg class="task-icon" viewBox="0 0 26 30"><rect x="1" y="3" width="23" height="23" rx="2" fill="#d8d8d8" stroke="#555"/><rect x="4" y="10" width="15" height="8" fill="#555"/><path d="M19 18l5 10" stroke="#3465a4" stroke-width="2.500"/></svg>
            <span class="task-desk">desktop 1</span>
            <span class="task-btn"><span class="task-logo">RViz</span>/home/user/ros2_...</span>
            <div class="task-clock"><b>21:55</b><span>Wednesday 24 July</span></div>
            <div class="task-dots"><i class="d3"></i><i class="d2"></i><i class="d1"></i></div>
        </div>
    </div>

    <div class="dockbar">
        <svg class="info" viewBox="0 0 24 24"><circle cx="12" cy="12" r="10.500" fill="none" stroke="#9aa0aa" stroke-width="1.500"/><path d="M12 10.500v7M12 6.500v2" stroke="#9aa0aa" stroke-width="2"/></svg>
        <span class="checkpoint">Checkpoint 7: URDF for ROS2</span>
        <div class="timer"><svg viewBox="0 0 16 16"><circle cx="8" cy="8" r="8" fill="#fff"/><path d="M8 3.500V8l3 3" fill="none" stroke="#1f232d" stroke-width="1.500"/></svg><span>23:22</span></div>
        <div class="tools">
            <span class="dt"><svg viewBox="0 0 26 34"><path d="M7 1h18l-5 32H1z" fill="#bdbec2"/><path d="M9 9l7 8-8 7M13 26h6" fill="none" stroke="#1f232d" stroke-width="2"/></svg><em class="badge">1</em></span>
            <span class="dt"><svg viewBox="0 0 28 26"><path d="M10 2L2 13l8 11M18 2l8 11-8 11" fill="none" stroke="#bdbec2" stroke-width="2.400"/></svg><em class="badge">1</em></span>
            <span class="dt"><svg viewBox="0 0 26 40"><rect x="4" y="2" width="20" height="36" rx="2" fill="none" stroke="#bdbec2" stroke-width="2.500"/><path d="M14 2h7v11l-3.500-3-3.500 3z" fill="#bdbec2"/><path d="M1 9h5M1 20h5M1 31h5" stroke="#bdbec2" stroke-width="2.500"/></svg><em class="badge">1</em></span>
            <span class="dt"><svg viewBox="0 0 26 40"><path d="M13 1l12 7v24l-12 7-12-7V8z" fill="#bdbec2"/><path d="M13 7l7 5-7 6-7-6z" fill="#1f232d"/></svg><em class="badge">1</em></span>
            <span class="dt"><svg viewBox="0 0 30 38"><rect x="2" y="2" width="26" height="26" rx="2" fill="none" stroke="#fff" stroke-width="3"/><path d="M15 28v6M8 36h14" stroke="#fff" stroke-width="4"/></svg><em class="badge">1</em></span>
            <span class="dt"><svg viewBox="0 0 30 36"><path d="M15 5Q8 1 1 3v28q7-2 14 2 7-4 14-2V3q-7-2-14 2z" fill="#bdbec2" stroke="#1f232d"/><path d="M15 5v28" stroke="#1f232d" stroke-width="1.500"/><path d="M19 10h7M19 14h7M19 18h7M19 22h7M19 26h7" stroke="#1f232d" stroke-width="1.500"/></svg></span>
            <span class="dt"><svg viewBox="0 0 30 36"><circle cx="15" cy="3" r="2.500" fill="#bdbec2"/><path d="M15 3v8" stroke="#bdbec2" stroke-width="2"/><path d="M15 9c-8 0-12 6-12 13v8c0 3 3 4 6 4h12c3 0 6-1 6-4v-8c0-7-4-13-12-13z" fill="#bdbec2"/><circle cx="10" cy="21" r="3" fill="#1f232d"/><circle cx="20" cy="21" r="3" fill="#1f232d"/></svg><em class="spark">✳</em></span>
            <span class="dt"><svg viewBox="0 0 30 36" fill="none" stroke="#d6d7da" stroke-width="2.200"><ellipse cx="15" cy="18" rx="6.500" ry="14"/><ellipse cx="15" cy="18" rx="6.500" ry="14" transform="rotate(60 15 18)"/><ellipse cx="15" cy="18" rx="6.500" ry="14" transform="rotate(120 15 18)"/></svg></span>
            <span class="dt"><svg viewBox="0 0 26 30"><path d="M13 0l13 15h-4v15h-6V20h-6v10H4V15H0z" fill="#bdbec2"/></svg></span>
            <span class="dt"><span class="help">?</span></span>
        </div>
    </div>
</div>

</body>
</html>
```

FILE: styles.css
```css
* {
    box-sizing: border-box;
}
body {
    margin: 0;
    width: 2560px;
    height: 1440px;
    overflow: hidden;
    font-family: "Liberation Sans", Arial, sans-serif;
    background: linear-gradient(#d9d9d9 0, #d9d9d9 234px, #26231f 240px, #1a1816 700px, #11100f 1440px);
    color: #333;
}
svg {
    display: block;
}
.defs {
    position: absolute;
}

/* mac menu bar */
.mac-menu {
    height: 24px;
    display: flex;
    align-items: center;
    padding-left: 20px;
    gap: 21px;
    font-size: 13.3px;
    color: #1c1c1c;
    background: linear-gradient(90deg, #a3b1c9 0, #afbacd 40%, #c3c8d2 70%, #dcdcdc 100%);
}
.apple {
    width: 16px;
    height: 18px;
    margin-right: 1px;
}
.mac-app {
    font-weight: bold;
}
.mac-status {
    margin-left: auto;
    display: flex;
    align-items: center;
    padding-right: 18px;
}
.ms {
    width: 36px;
    height: 24px;
    display: flex;
    align-items: center;
    justify-content: center;
}
.ms svg {
    width: 17px;
    height: 17px;
}
.wd {
    background: #fff;
    color: #ccc;
    font-size: 10px;
    font-weight: bold;
    font-style: italic;
    padding: 3px 4px;
}
.mac-clock {
    margin-left: 8px;
    font-size: 13.5px;
}

/* chrome */
.browser {
    width: 2540px;
    height: 1395px;
    display: flex;
    flex-direction: column;
    border-top: 1px solid #111;
    border-radius: 12px 12px 10px 10px;
    overflow: hidden;
}
.tabstrip {
    height: 40px;
    flex: none;
    display: flex;
    align-items: flex-end;
    background: #dfd6d3;
    font-size: 13px;
    position: relative;
}
.lights {
    width: 92px;
    height: 40px;
    display: flex;
    align-items: center;
    padding-left: 20px;
    gap: 6px;
}
.lights i {
    width: 14px;
    height: 14px;
    border-radius: 50%;
}
.red { background: #ed6a5e; }
.amber { background: #f4bf4f; }
.green { background: #61c554; }
.tab {
    width: 111.3px;
    height: 34px;
    flex: none;
    display: flex;
    align-items: center;
    padding: 0 0 6px 7px;
    position: relative;
    border-radius: 10px 10px 0 0;
}
.tab::after {
    content: "";
    position: absolute;
    right: 2px;
    top: 4px;
    height: 20px;
    width: 2px;
    background: #fff;
}
.tab.active {
    background: #fff;
}
.tab.active::after,
.tab:nth-child(2)::after {
    display: none;
}
.fav {
    width: 16px;
    height: 16px;
    flex: none;
}
.tab-title {
    width: 50px;
    margin-left: 10px;
    overflow: hidden;
    white-space: nowrap;
    -webkit-mask-image: linear-gradient(90deg, #000 70%, transparent);
    mask-image: linear-gradient(90deg, #000 70%, transparent);
}
.tab-x {
    width: 12px;
    height: 12px;
    margin-left: 2px;
    flex: none;
}
.new-tab {
    height: 34px;
    font-size: 22px;
    line-height: 28px;
    margin-left: 2px;
}
.tab-menu {
    position: absolute;
    left: 2504px;
    top: 7px;
    width: 30px;
    height: 27px;
    background: #fff;
    border-radius: 9px;
    padding: 6px 8px;
}
.omnirow {
    height: 40px;
    flex: none;
    display: flex;
    align-items: flex-start;
    padding: 6px 0 0 4px;
    background: #fff;
}
.nav {
    width: 36px;
    height: 34px;
    display: flex;
    align-items: center;
    justify-content: center;
}
.nav svg {
    width: 16px;
    height: 16px;
}
.omnibox {
    width: 1957px;
    height: 34px;
    margin-left: 8px;
    display: flex;
    align-items: center;
    padding: 0 6px 0 5px;
    background: #dcdcdc;
    border-radius: 17px;
}
.site-btn {
    width: 24px;
    height: 24px;
    background: #fff;
    border-radius: 50%;
    padding: 4px;
}
.url {
    margin-left: 8px;
    font-size: 15px;
    color: #222;
}
.url-path {
    color: #666;
}
.omni-right {
    margin-left: auto;
    display: flex;
}
.oi {
    width: 33px;
    display: flex;
    justify-content: center;
}
.oi svg {
    width: 18px;
    height: 18px;
}
.ext {
    width: 36px;
    height: 34px;
    flex: none;
    display: flex;
    align-items: center;
    justify-content: center;
}
.omnibox + .ext {
    margin-left: 9px;
}
.ext svg {
    width: 20px;
    height: 20px;
}
.ext-s {
    font-style: italic;
    font-weight: bold;
    font-size: 16px;
    color: #999;
}
.kebab {
    flex-direction: column;
    gap: 3px;
}
.kebab i {
    width: 4px;
    height: 4px;
    border-radius: 50%;
    background: #333;
}
.omni-sep {
    width: 2px;
    height: 24px;
    margin: 5px 8px 0 9px;
    background: #dfd6d3;
}
.bookmarks {
    height: 40px;
    flex: none;
    display: flex;
    align-items: center;
    padding-left: 14px;
    gap: 17px;
    background: #fff;
    border-bottom: 1px solid #bbb;
    font-size: 13px;
    color: #333;
}
.bm {
    display: flex;
    align-items: center;
    gap: 8px;
    white-space: nowrap;
}
.bm.tight {
    letter-spacing: -.25px;
}
.bm svg {
    width: 16px;
    height: 16px;
    flex: none;
}
.bm-more {
    margin-left: auto;
    font-size: 20px;
    line-height: 20px;
}
.bm-sep {
    width: 1px;
    height: 24px;
    background: #ccc;
}
.bookmarks .bm:last-child {
    margin-right: 13px;
}

/* remote desktop frame */
.remote-bar {
    height: 30px;
    flex: none;
    display: flex;
    align-items: center;
    padding: 0 26px 0 12px;
    background: #222;
}
.rb-icon {
    width: 20px;
    height: 20px;
    flex: none;
}
.rb-group {
    display: flex;
    gap: 24px;
    margin-left: 35px;
}
.rb-group.wide {
    gap: 35px;
    margin-left: auto;
}
.desktop {
    flex: 1;
    background: #000;
    position: relative;
    display: flex;
    flex-direction: column;
    min-height: 0;
}
.float-btn {
    position: absolute;
    left: 2489px;
    top: 4px;
    width: 45px;
    height: 25px;
    background: #eee;
    border-radius: 4px;
    padding: 3px 11px;
}
.rviz {
    width: 2090px;
    height: 1136px;
    margin-left: 225px;
    flex: none;
    display: flex;
    flex-direction: column;
    background: #eee;
    font-family: "DejaVu Sans", sans-serif;
    font-size: 16.8px;
    color: #2e3436;
}
.titlebar {
    height: 25px;
    flex: none;
    display: flex;
    align-items: center;
    padding: 0 6px;
    background: linear-gradient(#7a9dd2, #6187c4);
    border-bottom: 1px solid #4a6ea8;
    position: relative;
}
.title-logo {
    font-size: 8px;
    color: #c3d2ea;
    width: 20px;
    white-space: nowrap;
}
.title-text {
    margin-left: auto;
    margin-right: auto;
    padding-left: 40px;
    font-size: 14.6px;
    font-weight: bold;
    color: #f0f3fa;
    white-space: nowrap;
}
.win-btns {
    display: flex;
    gap: 5px;
}
.win-btns i {
    width: 16px;
    height: 16px;
    background: #8fb0e0;
    border: 1px solid #35558e;
}
.win-close {
    background: #c5d5ee !important;
}
.menubar {
    height: 28px;
    flex: none;
    display: flex;
    align-items: center;
    gap: 19px;
    padding-left: 14px;
    background: #eee;
}
.toolbar {
    height: 50px;
    flex: none;
    display: flex;
    align-items: center;
    padding: 4px 0 0 18px;
    background: linear-gradient(#fbf9fb, #f2f0f2);
    border-bottom: 1px solid #d4d4d4;
    font-size: 14.4px;
    position: relative;
}
.grip {
    width: 7px;
    height: 24px;
    background: radial-gradient(circle, #aaa 1px, transparent 1.2px) 0 0 / 4px 4px;
}
.tool {
    display: flex;
    align-items: center;
    white-space: nowrap;
}
.tool svg {
    flex: none;
    width: 22px;
    height: 22px;
}
.tool.pressed {
    width: 113px;
    height: 42px;
    margin-left: -7px;
    padding-left: 3px;
    gap: 1px;
    border: 1px solid #bbb;
    border-radius: 3px;
    background: #dedede;
}
.move-cam { margin-left: 5px; gap: 2px; }
.select { margin-left: 34px; gap: 3px; }
.focus { margin-left: 37px; gap: 3px; }
.measure { margin-left: 31px; gap: 3px; }
.pose { margin-left: 34px; gap: 5px; }
.goal { margin-left: 35px; gap: 5px; }
.pin { margin-left: 40px; gap: 3px; }
.pose svg, .goal svg { width: 17px; height: 17px; }
.pin svg { width: 14px; height: 22px; }
.plus { margin-left: 39px; }
.minus { margin-left: 46px; }
.plus svg, .minus svg { width: 18px; height: 18px; }
.sel-box {
    width: 21px;
    height: 17px;
    background: #f7f2a8;
    border: 1px dashed #222;
}
.ruler {
    width: 21px;
    height: 9px;
    background: #d8d092;
    border: 1px solid #555;
}
.more-arrow {
    width: 0;
    height: 0;
    margin: 22px 0 0 -3px;
    border: 4px solid transparent;
    border-top-color: #555;
}

/* dock panels */
.main {
    height: 915px;
    flex: none;
    display: flex;
    padding-top: 3px;
}
.dock {
    flex: none;
    display: flex;
    flex-direction: column;
}
.displays {
    width: 446px;
}
.views {
    width: 352px;
}
.dock-title {
    height: 29px;
    flex: none;
    display: flex;
    align-items: center;
    padding-left: 4px;
    gap: 8px;
    background: #b1afb2;
    color: #2a2a2e;
}
.dock-title > svg {
    width: 22px;
    height: 22px;
}
.views .dock-title > svg {
    height: 14px;
}
.dock-close {
    margin-left: auto;
    width: 20px;
    height: 21px;
    background: #fff;
    border: 1px solid #bbb;
    border-radius: 2px;
    margin-right: 3px;
    display: flex;
    align-items: center;
    justify-content: center;
}
.dock-close svg {
    width: 16px;
    height: 16px;
}
.tree {
    height: 722px;
    flex: none;
    display: flex;
    background: #fff;
    border-bottom: 1px solid #c4c4c4;
    font-size: 17px;
}
.tree-rows {
    width: 428px;
    flex: none;
    padding-top: 1.5px;
}
.row {
    height: 24.85px;
    display: flex;
}
.prop {
    width: 224px;
    flex: none;
    display: flex;
    align-items: center;
    white-space: nowrap;
    border-right: 1px solid #d4d4d4;
}
.lv0 { padding-left: 7px; }
.lv1 { padding-left: 33px; }
.lv2 { padding-left: 68px; }
.val {
    flex: 1;
    display: flex;
    align-items: center;
    padding-left: 3px;
    white-space: nowrap;
}
.twist {
    width: 16px;
    flex: none;
    display: flex;
    justify-content: center;
}
.twist.open::before {
    content: "";
    border: 5px solid transparent;
    border-top-color: #555;
    border-bottom-width: 0;
}
.twist.shut::before {
    content: "";
    border: 5px solid transparent;
    border-left-color: #555;
    border-right-width: 0;
}
.slot {
    width: 38px;
    flex: none;
}
.slot svg {
    width: 20px;
    height: 18px;
    margin-left: 9px;
}
.slot-0 {
    width: 38px;
    flex: none;
    display: flex;
    justify-content: center;
}
.slot-0 svg {
    width: 24px;
    height: 20px;
}
.label {
    margin-left: 9px;
}
.on {
    color: #3a70bb;
    font-weight: bold;
}
.tf-name {
    color: #2e3436;
}
.check {
    width: 17px;
    height: 16px;
    margin-left: 1px;
    display: block;
    background: #fff;
    border: 1px solid #c0c0c0;
    color: #111;
}
.check svg {
    width: 15px;
    height: 14px;
}
.check.blue {
    color: #2f66b4;
}
.swatch {
    width: 17px;
    height: 16px;
    margin: 0 6px 0 4px;
    background: #a0a0a4;
    border: 1px solid #222;
}
.scrollbar {
    width: 18px;
    flex: none;
    display: flex;
    flex-direction: column;
    border-left: 1px solid #d4d4d4;
    background: #f6f6f6;
}
.sb-btn {
    height: 20px;
    flex: none;
    display: flex;
    align-items: center;
    justify-content: center;
    background: #f1f1f1;
}
.sb-thumb {
    height: 100px;
    flex: none;
    background: #dedede;
}
.sb-track {
    flex: 1;
}
.up, .down, .left, .right {
    display: block;
    width: 0;
    height: 0;
    border: 5px solid transparent;
}
.up { border-bottom-color: #444; border-top-width: 0; }
.down { border-top-color: #444; border-bottom-width: 0; }
.left { border-right-color: #444; border-left-width: 0; }
.right { border-left-color: #444; border-right-width: 0; }
.split-handle {
    height: 6px;
    flex: none;
}
.desc {
    height: 101px;
    flex: none;
    background: #fff;
    border: 1px solid #c4c4c4;
}
.dock-btns {
    display: flex;
    gap: 8.5px;
    padding: 9px 1px 0 3px;
}
.btn {
    height: 32px;
    flex: 1;
    display: flex;
    align-items: center;
    justify-content: center;
    background: linear-gradient(#fbfbfb, #ececec);
    border: 1px solid #bcbcbc;
    border-radius: 3px;
    box-shadow: 0 1px 0 #ccc;
}
.btn.off {
    color: #a8a8a8;
}
.hide-handle {
    width: 42px;
    flex: none;
    display: flex;
    align-items: center;
    justify-content: center;
    padding-bottom: 6px;
}
.hide-handle.right-side {
    width: 41px;
}
.viewer {
    width: 1209px;
    height: 881px;
    flex: none;
    margin-top: 12px;
}
.grid-far {
    fill: none;
    stroke: #666;
    stroke-width: 1.5;
}
.grid-near {
    fill: none;
    stroke: #5f5f5f;
    stroke-width: 1.1;
}
.view-type {
    height: 51px;
    flex: none;
    display: flex;
    align-items: center;
    padding: 0 2px 5px 5px;
    gap: 7px;
}
.combo {
    width: 182px;
    flex: none;
    gap: 12px;
    padding-left: 3px;
}
.combo i {
    border-width: 4px;
}
.zero {
    flex: none;
    width: 104px;
    margin-left: 1px;
}
.view-tree {
    height: 781px;
    flex: none;
    display: flex;
    flex-direction: column;
    background: #fff;
    border: 1px solid #c4c4c4;
    font-size: 16.6px;
}
.vrow {
    height: 22.2px;
    display: flex;
}
.vfill {
    flex: 1;
}
.vprop {
    width: 175px;
    flex: none;
    display: flex;
    align-items: center;
    padding-left: 56px;
    white-space: nowrap;
    border-right: 1px solid #d4d4d4;
}
.vp-top {
    padding-left: 5px;
    gap: 9px;
}
.vp-sub {
    padding-left: 31px;
    gap: 9px;
}
.vval {
    flex: 1;
    display: flex;
    align-items: center;
    padding-left: 3px;
    white-space: nowrap;
}
.strong {
    font-weight: bold;
}
.view-btns {
    padding: 9px 2px 0 3px;
}

/* time panel */
.time-panel {
    height: 118px;
    flex: none;
    border-top: 1px solid #dcdcdc;
    position: relative;
}
.time-row {
    height: 32px;
    margin-top: 10px;
    display: flex;
    align-items: center;
    gap: 8px;
    padding-left: 15px;
}
.field {
    width: 186px;
    height: 32px;
    margin-right: 1.5px;
    display: flex;
    align-items: center;
    padding-left: 2px;
    background: #fff;
    border: 1px solid #bbb;
    border-radius: 3px;
}
.exp {
    margin-left: auto;
    margin-right: 21px;
    display: flex;
    align-items: center;
    gap: 7px;
}
.exp .check {
    height: 18px;
    width: 18px;
}
.hint-row {
    height: 31px;
    margin-top: 13px;
    display: flex;
    align-items: center;
    padding-left: 2px;
}
.reset {
    flex: none;
    width: 69px;
    height: 31px;
}
.hint {
    margin-left: 10px;
    white-space: nowrap;
}
.fps {
    margin-left: auto;
    margin-right: 31px;
    margin-bottom: 8px;
}
.size-grip {
    position: absolute;
    right: 0;
    bottom: 0;
    width: 16px;
    height: 16px;
    background: radial-gradient(circle, #bbb 1px, transparent 1.2px) 0 0 / 4px 4px;
    -webkit-mask-image: linear-gradient(135deg, transparent 50%, #000 50%);
}

/* desktop task bar */
.taskbar {
    height: 39px;
    flex: none;
    display: flex;
    align-items: center;
    padding-left: 231px;
    color: #fff;
    font-family: "DejaVu Sans", sans-serif;
}
.task-icon {
    width: 26px;
    height: 30px;
}
.task-desk {
    margin-left: 11px;
    font-size: 17px;
    font-weight: bold;
    letter-spacing: .4px;
}
.task-btn {
    width: 193px;
    height: 38px;
    margin-left: 9px;
    padding-left: 3px;
    display: flex;
    align-items: center;
    gap: 5px;
    background: #161616;
    border: 1px solid #555;
    border-radius: 6px;
    font-size: 15.6px;
    color: #ddd;
    white-space: nowrap;
}
.task-logo {
    font-family: "Liberation Serif", serif;
    font-size: 15px;
    color: #fff;
}
.task-clock {
    width: 200px;
    margin-left: auto;
    display: flex;
    flex-direction: column;
    align-items: center;
    line-height: 20px;
    font-size: 16px;
    color: #ddd;
}
.task-clock b {
    font-size: 17px;
    color: #fff;
}
.task-dots {
    width: 18px;
    margin: 14px 3px 0 182px;
    height: 20px;
    display: flex;
    align-items: flex-end;
    gap: 3px;
}
.task-dots i {
    width: 4px;
    background: repeating-linear-gradient(0deg, #2f80e0 0, #2f80e0 4px, transparent 4px, transparent 7px);
}
.d3 { height: 4px; }
.d2 { height: 11px; }
.d1 { height: 18px; }

/* construct dock */
.dockbar {
    height: 69px;
    flex: none;
    display: flex;
    align-items: center;
    padding-left: 25px;
    background: #1f232d;
    border-bottom: 1px solid #555b66;
}
.info {
    width: 24px;
    height: 24px;
}
.checkpoint {
    margin-left: 8px;
    font-family: "Open Sans", sans-serif;
    font-size: 11.5px;
    letter-spacing: 1.6px;
    color: #9aa0aa;
}
.timer {
    margin-left: auto;
    margin-right: 21px;
    display: flex;
    align-items: center;
    gap: 10px;
    font-family: "Open Sans", sans-serif;
    font-size: 19px;
    color: #2e7d12;
}
.timer svg {
    width: 16px;
    height: 16px;
    margin-top: 4px;
}
.tools {
    display: flex;
    height: 100%;
}
.dt {
    width: 80px;
    flex: none;
    display: flex;
    align-items: center;
    justify-content: center;
    position: relative;
}
.dt svg {
    width: 30px;
    height: 38px;
}
.badge {
    position: absolute;
    left: 50px;
    top: 0;
    width: 25px;
    height: 25px;
    border-radius: 50%;
    display: flex;
    align-items: center;
    justify-content: center;
    background: #2f74d0;
    color: #dfe9f7;
    font-family: "Liberation Sans", sans-serif;
    font-size: 13px;
    font-style: normal;
}
.spark {
    position: absolute;
    left: 48px;
    top: 6px;
    color: #fff;
    font-size: 14px;
    font-style: normal;
}
.help {
    width: 50px;
    height: 50px;
    display: flex;
    align-items: center;
    justify-content: center;
    background: #52a24c;
    border-radius: 3px;
    color: #fff;
    font-size: 34px;
    font-weight: bold;
}
```
